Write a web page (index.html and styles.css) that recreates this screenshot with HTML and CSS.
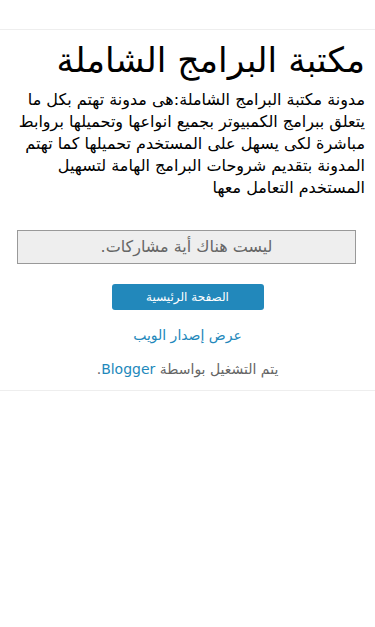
FILE: index.html
```html
<!DOCTYPE html>
<html lang="ar" dir="rtl">
<head>
    <meta charset="UTF-8">
    <meta name="viewport" content="width=device-width, initial-scale=1.0">
    <title>مكتبة البرامج الشاملة</title>
    <link rel="stylesheet" href="styles.css">
</head>
<body>
    <div class="top-bar"></div>

    <div class="header">
        <h1 class="title">مكتبة البرامج الشاملة</h1>
        <p class="description">مدونة مكتبة البرامج الشاملة:هى مدونة تهتم بكل ما يتعلق ببرامج الكمبيوتر بجميع انواعها وتحميلها بروابط مباشرة لكى يسهل على المستخدم تحميلها كما تهتم المدونة بتقديم شروحات البرامج الهامة لتسهيل المستخدم التعامل معها</p>
    </div>

    <div class="main">
        <div class="status-msg">ليست هناك أية مشاركات.</div>

        <div class="home-link">
            <a class="home-button" href="#">الصفحة الرئيسية</a>
        </div>

        <div class="web-version">
            <a href="#">عرض إصدار الويب</a>
        </div>

        <div class="attribution">يتم التشغيل بواسطة <a href="#">Blogger</a>.</div>
    </div>
</body>
</html>
```

FILE: styles.css
```css
body {
    margin: 0;
    font-family: "DejaVu Sans", sans-serif;
    color: #000;
    background: #fff;
}

a {
    color: #2288bb;
    text-decoration: none;
}

.top-bar {
    height: 29px;
    border-bottom: 1px solid #eee;
}

.header {
    padding: 0 10px 0 10px;
}

.title {
    margin: 5px 0 0 0;
    font-size: 34.5px;
    font-weight: normal;
    line-height: 50px;
}

.description {
    margin: 4px 0 0 0;
    font-size: 16px;
    line-height: 22px;
}

.main {
    margin-top: 31px;
    border-bottom: 1px solid #eee;
    padding-bottom: 11px;
}

.status-msg {
    margin: 0 19px 0 17px;
    padding: 5px 0;
    background: #eee;
    border: 1px solid #999;
    color: #666;
    font-size: 16px;
    line-height: 22px;
    text-align: center;
}

.home-link {
    margin-top: 20px;
    text-align: center;
}

.home-button {
    display: inline-block;
    width: 152px;
    height: 26px;
    line-height: 26px;
    background: #2288bb;
    color: #fff;
    border-radius: 3px;
    font-size: 12px;
}

.web-version {
    margin-top: 15px;
    text-align: center;
    font-size: 14px;
    line-height: 20px;
}

.attribution {
    margin-top: 14px;
    text-align: center;
    font-size: 14px;
    line-height: 20px;
    color: #666;
}
```
